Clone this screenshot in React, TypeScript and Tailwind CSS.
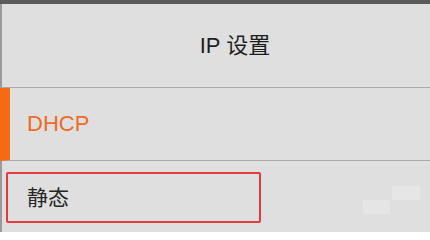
export default function App() {
  return (
    <div className="relative flex h-[232px] w-[430px] flex-col overflow-hidden border-t-4 border-[#5b5b5b] bg-[#dfdfdf] font-['Liberation_Sans','Noto_Sans_CJK_SC',sans-serif]">
      <div className="flex h-[84px] shrink-0 items-center justify-center border-b border-l-2 border-[#a9a9a9] border-l-[#9a9a9a] pl-[38px] text-[22px] text-[#1e1e1e]">
        IP 设置
      </div>
      <div className="flex h-[73px] shrink-0 items-center border-b border-l-[10px] border-[#acacac] border-l-[#f36b12] pl-[17px] pb-[2px] text-[22px] text-[#ef6a25]">
        DHCP
      </div>
      <div className="flex flex-1 border-l-2 border-[#9a9a9a] pl-[4px] pt-[11px]">
        <div className="flex h-[51px] w-[255px] items-center rounded-[2px] border-2 border-[#e23a3e] pl-[19px] text-[21px] text-[#262626]">
          静态
        </div>
      </div>
      <div className="absolute left-[363px] top-[196px] h-[14px] w-[27px] bg-[#e5e5e5]" />
      <div className="absolute left-[392px] top-[182px] h-[14px] w-[28px] bg-[#e6e6e6]" />
    </div>
  );
}
